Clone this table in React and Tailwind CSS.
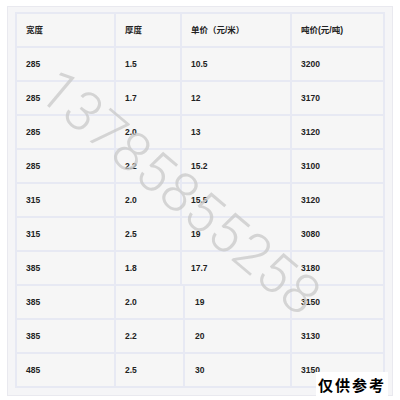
import React from 'react';

const rows = [
  ['285', '1.5', '10.5', '3200'],
  ['285', '1.7', '12', '3170'],
  ['285', '2.0', '13', '3120'],
  ['285', '2.2', '15.2', '3100'],
  ['315', '2.0', '15.5', '3120'],
  ['315', '2.5', '19', '3080'],
  ['385', '1.8', '17.7', '3180'],
  ['385', '2.0', '19', '3150'],
  ['385', '2.2', '20', '3130'],
  ['485', '2.5', '30', '3150'],
];

const font = { fontFamily: '"Liberation Sans", "Noto Sans CJK SC", sans-serif' };

const Row = ({ cells, shifted }) => (
  <div
    className={
      shifted
        ? 'grid grid-cols-[97px_67px_105px_91px] gap-[2px] h-[32px]'
        : 'grid grid-cols-[97px_64px_108px_91px] gap-[2px] h-[32px]'
    }
  >
    {cells.map((c, i) => (
      <div
        key={i}
        className={
          shifted && i === 2
            ? 'bg-[#f6f6f6] flex items-center pl-[10px] text-[8.5px] font-bold text-[#222]'
            : 'bg-[#f6f6f6] flex items-center pl-[9px] text-[8.5px] font-bold text-[#222]'
        }
      >
        {c}
      </div>
    ))}
  </div>
);

export default function App() {
  return (
    <div className="w-[400px] h-[400px] bg-white relative overflow-hidden" style={font}>
      <div className="absolute left-[7px] top-[6px] w-[386px] h-[390px] bg-[#f5f5f7] border border-[#e9e9ef]" />
      <div className="relative pl-[15px] pt-[12px]">
        <div className="w-[370px] bg-[#e7e9f3] p-[2px] flex flex-col gap-[2px]">
          <Row cells={['宽度', '厚度', '单价（元/米）', '吨价(元/吨)']} />
          {rows.map((r, i) => (
            <Row key={i} cells={r} shifted={i >= 7} />
          ))}
        </div>
      </div>

      {/* watermark */}
      <div
        className="absolute left-[180px] top-[193px] text-[55px] text-[#c8c8c8]/75 whitespace-nowrap tracking-[1px] leading-none"
        style={{
          fontFamily: 'Roboto, "DejaVu Sans", sans-serif',
          fontWeight: 300,
          transform: 'translate(-50%, -50%) rotate(40deg)',
        }}
      >
        13785855258
      </div>

      <div className="absolute left-[316px] top-[372px] w-[72px] h-[24px] bg-white flex items-center justify-center">
        <span
          className="text-[15px] font-bold text-black tracking-[2px] whitespace-nowrap leading-none"
          style={{ fontFamily: '"Noto Sans CJK SC", sans-serif' }}
        >
          仅供参考
        </span>
      </div>
    </div>
  );
}
